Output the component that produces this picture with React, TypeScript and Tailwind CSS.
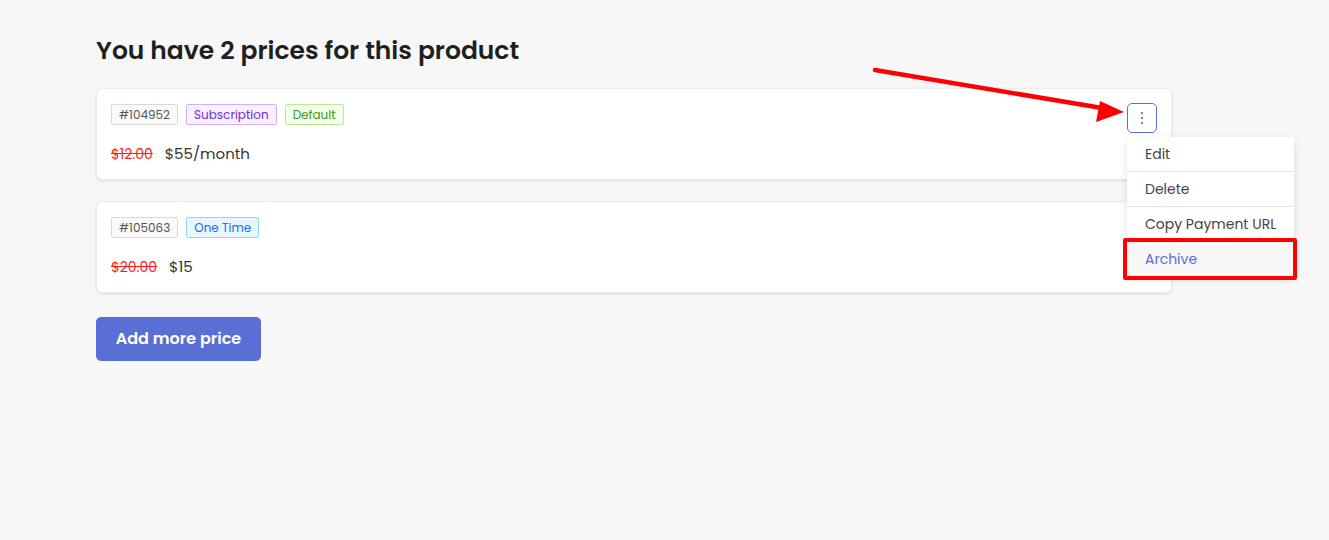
import React from "react";

const tagBase = "inline-flex items-center h-[21px] px-[7px] text-[12px] leading-none border rounded-[2px]";

const prices = [
  {
    id: "#104952",
    tags: [
      { label: "Subscription", cls: "border-[#d3adf7] bg-[#f9f0ff] text-[#722ed1]" },
      { label: "Default", cls: "border-[#b7eb8f] bg-[#f6ffed] text-[#389e0d]" },
    ],
    old: "$12.00",
    now: "$55/month",
    menu: true,
  },
  {
    id: "#105063",
    tags: [{ label: "One Time", cls: "border-[#91d5ff] bg-[#e6f7ff] text-[#1d6fdc]" }],
    old: "$20.00",
    now: "$15",
    menu: false,
  },
];

export default function App() {
  return (
    <div
      className="relative w-[1329px] h-[540px] bg-[#f7f7f7] text-[#333] overflow-hidden"
      style={{ fontFamily: "Poppins, 'Open Sans', 'Noto Sans', sans-serif" }}
    >
      <div className="pl-[96px] pt-[34px] w-[1172px]">
        <h1 className="text-[25px] leading-[33px] font-semibold text-[#1f1f1f]">You have 2 prices for this product</h1>

        <div className="mt-[21px] flex flex-col gap-[21px]">
          {prices.map((p) => (
            <div
              key={p.id}
              className="relative h-[92px] bg-white rounded-[6px] border border-[#ececec] shadow-[0_1px_3px_rgba(0,0,0,0.12)] px-[14px] pt-[15px]"
            >
              <div className="flex gap-[8px]">
                <span className={`${tagBase} border-[#d9d9d9] bg-[#fafafa] text-[#555]`}>{p.id}</span>
                {p.tags.map((t) => (
                  <span key={t.label} className={`${tagBase} ${t.cls}`}>{t.label}</span>
                ))}
              </div>
              <div className="mt-[18px] flex items-baseline gap-[12px]">
                <span className="text-[14px] text-[#ff1a1a] line-through">{p.old}</span>
                <span className="text-[15px] text-[#333]">{p.now}</span>
              </div>

              {p.menu && (
                <>
                  <button className="absolute right-[14px] top-[14px] w-[30px] h-[30px] rounded-[5px] border border-[#5a6fd6] bg-white flex items-center justify-center">
                    <svg width="4" height="14" viewBox="0 0 4 14" fill="#6b7fdc">
                      <rect x="1" y="1" width="2" height="2" />
                      <rect x="1" y="6" width="2" height="2" />
                      <rect x="1" y="11" width="2" height="2" />
                    </svg>
                  </button>
                  <div className="absolute left-[1030px] top-[48px] w-[167px] bg-white rounded-[3px] shadow-[0_3px_8px_rgba(0,0,0,0.12)] z-20 text-[14px] text-[#444] whitespace-nowrap">
                    {["Edit", "Delete", "Copy Payment URL"].map((m) => (
                      <div key={m} className="h-[35px] flex items-center pl-[18px] border-b border-[#e6e6e6]">{m}</div>
                    ))}
                    <div className="relative h-[34px] flex items-center pl-[18px] bg-[#f7f7f8] text-[#5a6fd6]">
                      Archive
                      <div className="absolute -left-[4px] -right-[3px] -top-[4px] -bottom-[4px] border-[4px] border-[#ff0000] rounded-[2px]" />
                    </div>
                  </div>
                </>
              )}
            </div>
          ))}
        </div>

        <button className="mt-[24px] w-[165px] h-[44px] rounded-[5px] bg-[#5a6fd6] text-white text-[16px] font-semibold">
          Add more price
        </button>
      </div>

      <svg className="absolute left-0 top-0 pointer-events-none z-30" width="1329" height="540">
        <line x1="875" y1="70" x2="1102" y2="108" stroke="#ff0000" strokeWidth="4.5" strokeLinecap="round" />
        <polygon points="1124,112 1100,101 1096,122" fill="#ff0000" />
      </svg>
    </div>
  );
}
